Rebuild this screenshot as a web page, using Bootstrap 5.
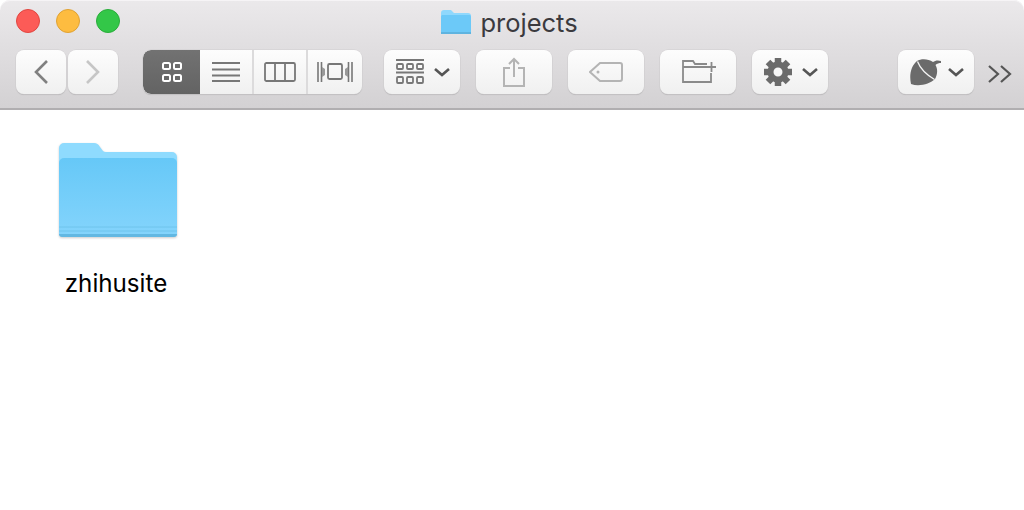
<!DOCTYPE html>
<html lang="en">
<head>
  <meta charset="UTF-8">
  <title>projects</title>
  <link href="https://cdn.jsdelivr.net/npm/bootstrap@5.3.2/dist/css/bootstrap.min.css" rel="stylesheet">
  <style>
    html, body { height: 100%; }
    body { background: #fff; font-family: "Inter", "Liberation Sans", sans-serif; overflow: hidden; }
    .finder-top {
      height: 110px;
      padding: 9px 12px 0 16px;
      background: linear-gradient(#ebe9eb, #d3d1d3);
      border-bottom: 2px solid #b0aeb0;
      border-radius: 10px 10px 0 0;
      box-shadow: inset 0 1px #f6f4f6;
    }
    .title-row { display: grid; grid-template-columns: 1fr auto 1fr; height: 41px; padding-right: 10px; }
    .light { width: 24px; height: 24px; border-radius: 50%; border: 1px solid; }
    .light-red { background: #fc5b57; border-color: #e14640; }
    .light-yellow { background: #fdbc40; border-color: #e0a233; }
    .light-green { background: #33c748; border-color: #2aad3b; }
    .win-title { color: #3b3a3e; font-size: 25.5px; line-height: 28px; }
    .tool-row { height: 44px; }
    .tool-btn {
      height: 44px;
      background: linear-gradient(#fdfdfd, #f0f0f0);
      border-radius: 8px;
      box-shadow: 0 0 0 .5px #d0ced0, 0 1px 1px #b4b2b4;
      color: #6b6b6b;
    }
    .nav-pair { column-gap: 2px; }
    .w-nav { width: 50px; }
    .w-drop { width: 76px; }
    .drop-pad { padding-left: 12px; column-gap: 10px; }
    .seg-group { width: 219px; margin-left: 25px; margin-right: 22px; }
    .seg-item { width: 54px; border-right: 2px solid #dcdbdc; }
    .seg-item:last-child { border-right: 0; }
    .seg-item.is-active { width: 57px; border-right: 0; background: linear-gradient(#727272, #636363); border-radius: 8px 0 0 8px; }
    .acorn-btn { margin-left: 70px; column-gap: 6px; }
    .file-item { width: 134px; margin: 31px 0 0 51px; }
    .folder-big { filter: drop-shadow(0 1px 1px rgba(0, 0, 0, .2)); }
    .file-label { color: #000; font-size: 24.2px; line-height: 28px; margin-top: 33px; }
  </style>
</head>
<body>
  <div class="finder-top">
    <div class="title-row">
      <div class="d-flex gap-3">
        <span class="light light-red"></span>
        <span class="light light-yellow"></span>
        <span class="light light-green"></span>
      </div>
      <div class="d-flex align-items-start gap-2">
        <svg width="32" height="26" viewBox="0 0 32 26"><path d="M1 4a3 3 0 0 1 3-3h7l3 3h14a3 3 0 0 1 3 3v16a2 2 0 0 1-2 2H3a2 2 0 0 1-2-2z" fill="#8fd8fd"/><rect x="1" y="6" width="30" height="19" rx="1.5" fill="#6cc9f8"/><rect x="1" y="23" width="30" height="2" fill="#5fb4e0"/></svg>
        <span class="win-title">projects</span>
      </div>
      <div></div>
    </div>
    <div class="tool-row d-flex">
      <div class="d-flex nav-pair">
        <div class="tool-btn w-nav d-flex align-items-center justify-content-center">
          <svg width="16" height="26" viewBox="0 0 16 26"><path d="M14 2 3 13l11 11" fill="none" stroke="#808080" stroke-width="2.600"/></svg>
        </div>
        <div class="tool-btn w-nav d-flex align-items-center justify-content-center">
          <svg width="16" height="26" viewBox="0 0 16 26"><path d="m2 2 11 11L2 24" fill="none" stroke="#c6c6c6" stroke-width="2.600"/></svg>
        </div>
      </div>
      <div class="tool-btn seg-group d-flex overflow-hidden">
        <div class="seg-item is-active d-flex align-items-center justify-content-center">
          <svg width="20" height="20" viewBox="0 0 20 20" fill="none" stroke="#fff" stroke-width="2"><rect x="1" y="1" width="7" height="6" rx="1.500"/><rect x="12" y="1" width="7" height="6" rx="1.500"/><rect x="1" y="13" width="7" height="6" rx="1.500"/><rect x="12" y="13" width="7" height="6" rx="1.500"/></svg>
        </div>
        <div class="seg-item d-flex align-items-center justify-content-center">
          <svg width="28" height="20" viewBox="0 0 28 20" stroke="#777" stroke-width="1.800"><path d="M0 1h28M0 7.500h28M0 13.500h28M0 19h28"/></svg>
        </div>
        <div class="seg-item d-flex align-items-center justify-content-center">
          <svg width="32" height="20" viewBox="0 0 32 20" fill="none" stroke="#777" stroke-width="1.800"><rect x="1" y="1" width="30" height="18" rx="1.500"/><path d="M11 1v18M21 1v18"/></svg>
        </div>
        <div class="seg-item d-flex align-items-center justify-content-center">
          <svg width="36" height="20" viewBox="0 0 36 20" fill="none" stroke="#777" stroke-width="1.600"><rect x="11" y="2" width="14" height="15" rx="1.500" stroke-width="1.800"/><path d="M1 0v20M4.500 0v20M35 0v20M31.500 0v20"/><path d="m5 5 3 2v6l-3 2zM31 5l-3 2v6l3 2z" fill="#999" stroke="none"/></svg>
        </div>
      </div>
      <div class="d-flex gap-3">
        <div class="tool-btn w-drop drop-pad d-flex align-items-center">
          <svg width="28" height="26" viewBox="0 0 28 26" fill="none" stroke="#777" stroke-width="1.800"><path d="M0 1h28M0 13.500h28"/><rect x="1" y="5" width="6" height="5" rx="1"/><rect x="11" y="5" width="6" height="5" rx="1"/><rect x="21" y="5" width="6" height="5" rx="1"/><rect x="1" y="18" width="6" height="6" rx="1"/><rect x="11" y="18" width="6" height="6" rx="1"/><rect x="21" y="18" width="6" height="6" rx="1"/></svg>
          <svg width="16" height="10" viewBox="0 0 16 10"><path d="m1 2 7 6 7-6" fill="none" stroke="#555" stroke-width="2.600"/></svg>
        </div>
        <div class="tool-btn w-drop d-flex align-items-center justify-content-center">
          <svg width="22" height="30" viewBox="0 0 22 30" fill="none" stroke="#b4b4b4" stroke-width="2"><path d="M7 11H1v18h20V11h-6M11 20V2M6 7l5-5 5 5"/></svg>
        </div>
        <div class="tool-btn w-drop d-flex align-items-center justify-content-center">
          <svg width="34" height="20" viewBox="0 0 34 20" fill="none" stroke="#b4b4b4" stroke-width="2"><path d="M11 1h20a2 2 0 0 1 2 2v14a2 2 0 0 1-2 2H11L1 10z"/><circle cx="9" cy="10" r="1.500" fill="#b4b4b4" stroke="none"/></svg>
        </div>
        <div class="tool-btn w-drop d-flex align-items-center justify-content-center">
          <svg width="36" height="24" viewBox="-2 1 36 24" fill="none" stroke="#8a8a8a" stroke-width="1.800"><path d="M29 14v9H1V2h10l2 3h12M1 8h24M25 8h9M29.500 3v10"/></svg>
        </div>
        <div class="tool-btn w-drop drop-pad d-flex align-items-center">
          <svg width="28" height="28" viewBox="0 0 28 28"><circle cx="14" cy="14" r="7.500" fill="none" stroke="#6b6b6b" stroke-width="6"/><path d="M14 0v6M14 22v6M0 14h6M22 14h6M4 4l4 4M20 20l4 4M24 4l-4 4M8 20l-4 4" stroke="#6b6b6b" stroke-width="6.500"/></svg>
          <svg width="16" height="10" viewBox="0 0 16 10"><path d="m1 2 7 6 7-6" fill="none" stroke="#555" stroke-width="2.600"/></svg>
        </div>
      </div>
      <div class="tool-btn w-drop drop-pad acorn-btn d-flex align-items-center">
        <svg width="32" height="27" viewBox="0 0 32 27"><path d="M7 2C11-.5 18-.5 23 3c2-1.500 5-2 8-1v2c-2 0-4 .5-5.500 2 2.500 4 2 10-.5 14C20 25 9 28 1 25-1 16 1 7 7 2z" fill="#6b6b6b"/><path d="M7.500 2.500C10 9 17 16 24.500 20.500" fill="none" stroke="#f5f5f5" stroke-width="1.300"/></svg>
        <svg width="16" height="10" viewBox="0 0 16 10"><path d="m1 2 7 6 7-6" fill="none" stroke="#555" stroke-width="2.600"/></svg>
      </div>
      <div class="ms-auto align-self-center">
        <svg width="24" height="20" viewBox="0 0 24 20" fill="none" stroke="#555" stroke-width="2.200"><path d="m1 2 9 8-9 8M13 2l9 8-9 8"/></svg>
      </div>
    </div>
  </div>
  <div class="file-item d-flex flex-column align-items-center">
    <svg class="folder-big" width="120" height="96" viewBox="0 0 120 96">
      <defs>
        <linearGradient id="folderFront" x1="0" y1="0" x2="0" y2="1"><stop offset="0" stop-color="#66c8f7"/><stop offset="1" stop-color="#84d4fc"/></linearGradient>
      </defs>
      <path d="M1 7a5 5 0 0 1 5-5h30c3 0 4 1 6 4l3 4q1 1 3 1h66a5 5 0 0 1 5 5v76a3 3 0 0 1-3 3H4a3 3 0 0 1-3-3z" fill="#8fdbfe"/>
      <path d="M1 22a5 5 0 0 1 5-5h108a5 5 0 0 1 5 5v70a3 3 0 0 1-3 3H4a3 3 0 0 1-3-3z" fill="url(#folderFront)"/>
      <path d="M1 86h118M1 90h118" stroke="#6ec4ec" stroke-width="1"/>
      <path d="M1 93h118a3 3 0 0 1-3 3H4a3 3 0 0 1-3-3z" fill="#62b8e2"/>
    </svg>
    <span class="file-label pe-1">zhihusite</span>
  </div>
  <script src="https://cdn.jsdelivr.net/npm/bootstrap@5.3.2/dist/js/bootstrap.bundle.min.js"></script>
</body>
</html>
